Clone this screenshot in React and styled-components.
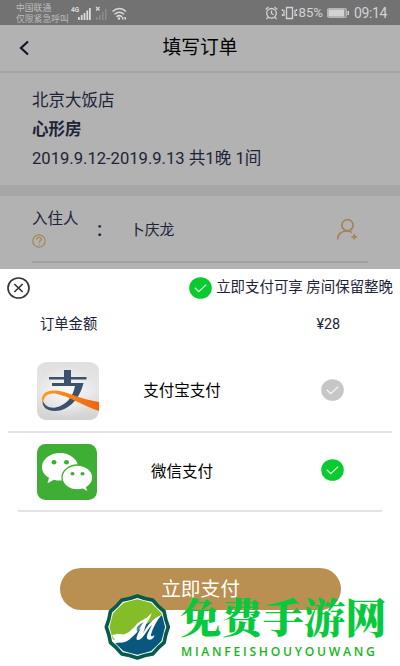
import React from 'react';
import styled, { createGlobalStyle } from 'styled-components';

const Global = createGlobalStyle`
  * { box-sizing: border-box; }
  body { margin: 0; background: #fff; }
`;

const Screen = styled.div`
  position: relative;
  width: 400px;
  height: 666px;
  overflow: hidden;
  display: flex;
  flex-direction: column;
  background: #b2b2b2;
  color: #1d2338;
  font-family: Roboto, 'Noto Sans CJK SC', sans-serif;
  white-space: nowrap;
`;

const StatusBar = styled.div`
  height: 25px;
  flex: none;
  display: flex;
  align-items: center;
  padding: 1px 13px 0 16px;
  background: #727272;
  color: #d2d2d2;
`;

const Carrier = styled.div`
  width: 54px;
  padding-top: 1px;
  font-size: 8.8px;
  line-height: 11px;
  color: #bdbdbd;
`;

const StatusRight = styled.div`
  margin-left: auto;
  display: flex;
  align-items: center;
  font-size: 13.2px;
  line-height: 24px;
`;

const Battery = styled.svg`
  margin: 0 5px 0 4px;
`;

const Clock = styled.span`
  font-size: 14px;
  width: 33px;
  letter-spacing: -0.4px;
`;

const Header = styled.div`
  height: 46px;
  flex: none;
  display: grid;
  grid-template-columns: 40px 1fr 40px;
  align-items: center;
`;

const BackIcon = styled.svg`
  margin: 0 0 0 18px;
`;

const Title = styled.h1`
  margin: 0;
  text-align: center;
  font-size: 18.8px;
  line-height: 26px;
  font-weight: 400;
  color: #000;
`;

const HotelCard = styled.div`
  height: 125px;
  flex: none;
  padding: 13px 32px 0;
  border-top: 2px solid #a5a5a5;
  border-bottom: 11px solid #a6a6a6;
`;

const HotelLine = styled.div`
  height: 29px;
  line-height: 29px;
  font-size: ${(p) => p.$size || 16.5}px;
  font-weight: ${(p) => (p.$bold ? 700 : 400)};
`;

const GuestRow = styled.div`
  height: 67px;
  flex: none;
  margin: 0 32px 6px;
  border-bottom: 2px solid #a1a1a1;
  display: grid;
  grid-template-columns: 65px 33px 1fr 31px;
  align-items: center;
`;

const GuestLabel = styled.div`
  display: flex;
  flex-direction: column;
  font-size: 15.5px;
  line-height: 24px;
  gap: 3px;
  padding-bottom: 3px;
`;

const GuestText = styled.span`
  font-size: ${(p) => p.$size || 14.8}px;
  font-weight: ${(p) => p.$weight || 400};
  line-height: 24px;
  padding-top: ${(p) => p.$top ?? 2}px;
`;

const Sheet = styled.div`
  flex: 1;
  display: flex;
  flex-direction: column;
  background: #fff;
`;

const SheetHeader = styled.div`
  height: 38px;
  flex: none;
  display: flex;
  align-items: center;
  justify-content: space-between;
  padding: 0 7px;
`;

const Benefit = styled.div`
  display: flex;
  align-items: center;
  gap: 4px;
  font-size: 14.45px;
  line-height: 24px;
`;

const AmountRow = styled.div`
  height: 35px;
  flex: none;
  display: flex;
  justify-content: space-between;
  padding: 0 60px 0 40px;
  font-size: 14.3px;
  line-height: 34px;
`;

const PayRow = styled.div`
  height: ${(p) => p.$height}px;
  flex: none;
  margin: ${(p) => p.$margin};
  padding: ${(p) => p.$padding};
  border-bottom: 2px solid #e3e3e3;
  display: grid;
  grid-template-columns: 62px 1fr 23px;
  align-items: center;
`;

const PayName = styled.div`
  padding-right: 56px;
  text-align: center;
  font-size: 15.5px;
  line-height: 24px;
  color: #000;
`;

const PayCheck = styled.div`
  display: flex;
  padding-bottom: 3px;
`;

const PayButton = styled.button`
  width: 281px;
  height: 42px;
  margin: 56px 0 0 60px;
  padding: 2px 0 0;
  border: 0;
  border-radius: 21px;
  background: #b99052;
  color: #fff;
  font-family: inherit;
  font-size: 19.7px;
  line-height: 38px;
`;

const Watermark = styled.div`
  position: absolute;
  left: 104px;
  top: 594px;
  display: flex;
  gap: 9px;
`;

const Brand = styled.div`
  display: flex;
  flex-direction: column;
  color: #08c93d;
`;

const BrandName = styled.div`
  height: 50px;
  font-family: 'Noto Serif CJK SC', 'Noto Sans CJK SC', serif;
  font-size: 41.3px;
  line-height: 43px;
  font-weight: 900;
`;

const BrandLatin = styled.div`
  padding-left: 1px;
  font-family: 'Open Sans', sans-serif;
  font-size: 12.2px;
  line-height: 15px;
  font-weight: 600;
  letter-spacing: 2.7px;
  color: #18b51c;
`;

const SignalIcons = () => (
  <svg width="58" height="16" viewBox="0 0 58 16" fill="#dadada">
    <text x="1" y="7" fontSize="6.500" fontWeight="700" fontFamily="Roboto">4G</text>
    <path d="M8 12h1.800v3H8zM10.800 10h1.800v5h-1.800zM13.600 8h1.800v7h-1.800zM16.400 5.500h1.800V15h-1.800zM19 3h1.800v12H19z" />
    <path d="M26 12h1.500v3H26zM29 10h1.500v5H29zM32 7h1.500v8H32zM35 4h1.500v11H35z" fill="#8d8d8d" />
    <path d="M26 2l3.500 3.500M29.500 2L26 5.500" stroke="#dadada" strokeWidth="1.200" />
    <g fill="none" stroke="#dadada" strokeWidth="1.500">
      <path d="M42.500 6.500q7-6 13.500 0M44.500 9.300q5-4.200 9.500 0M46.500 11.800q2.700-2.300 5.500 0" />
    </g>
    <circle cx="49" cy="13.500" r="1.200" />
    <path d="M52 12h1.500v2.500H52zM54.500 12H56v2.500h-1.500z" />
  </svg>
);

const AlarmIcons = () => (
  <svg width="34" height="14" viewBox="0 0 34 14" fill="none" stroke="#d2d2d2" strokeWidth="1.300">
    <circle cx="6.500" cy="7.300" r="4.800" />
    <path d="M6.500 4.500v3l2 1.300M.7 3.500L3.500 1M12.300 3.500L9.500 1M2.800 11.500L1.500 13M10.200 11.500l1.300 1.500" />
    <path d="M21.500 1.500h6v11h-6zM19 4v6M17.500 3v2M17.500 8v2M30 4v6M31.500 3v2M31.500 8v2" />
  </svg>
);

const CheckCircle = ({ color }) => (
  <svg width="23" height="22" viewBox="0 0 23 22">
    <ellipse cx="11.500" cy="11" rx="11.300" ry="10.800" fill={color} />
    <path d="M5.800 10.700l4 3.900 7.400-7" fill="none" stroke="#fff" strokeOpacity=".85" strokeWidth="1.300" />
  </svg>
);

const AlipayLogo = () => (
  <svg width="62" height="58" viewBox="0 0 62 58">
    <defs>
      <linearGradient id="silver" x1="0" y1="0" x2="0" y2="1">
        <stop offset="0" stopColor="#e0e0e0" />
        <stop offset=".5" stopColor="#e6e6e6" />
        <stop offset="1" stopColor="#d2d2d2" />
      </linearGradient>
      <radialGradient id="shine">
        <stop offset="0" stopColor="#fafafa" />
        <stop offset="1" stopColor="#fafafa" stopOpacity="0" />
      </radialGradient>
      <linearGradient id="orange" x1="0" y1="0" x2="1" y2="0">
        <stop offset="0" stopColor="#ff9b20" />
        <stop offset="1" stopColor="#ee6410" />
      </linearGradient>
    </defs>
    <rect width="62" height="58" rx="9" fill="url(#silver)" />
    <ellipse cx="30" cy="30" rx="30" ry="26" fill="url(#shine)" />
    <path d="M27 8h7v7h15.500v2.500H12V15h15zM27 17.500h7V21h12.500C43 36 32 49 18 49 9.500 49 5 45 5.500 38c2 6 7 8.500 13 7.500C29 43.500 36 35 38 24H15v-3h12z" fill="#3b526d" />
    <path d="M6 42C2 33 9 27.500 19 28.500c12 1.200 22 8 43 11.500v9C45 43 32 34.500 20 32 11 30.200 6.500 34 6 42z" fill="url(#orange)" />
  </svg>
);

const WechatLogo = () => (
  <svg width="60" height="56" viewBox="0 0 60 56">
    <rect width="60" height="56" rx="8.500" fill="#3eae35" />
    <path d="M23 9C13 9 5 15.300 5 23c0 4.500 2.600 8.300 7 10.800l-1.500 5.400 6.500-3.400c2 .6 4 .8 6 .8 10 0 18-6 18-13.600S33 9 23 9z" fill="#fff" />
    <path d="M40.300 21C31.800 21 25 26.600 25 33.500S31.800 46 40.300 46c2 0 3.800-.3 5.400-.8l5.300 3-1.200-5c3.600-2.200 6-5.700 6-9.700C55.800 26.600 49 21 40.300 21z" fill="#fff" stroke="#3eae35" strokeWidth="1.300" />
    <g fill="#3eae35">
      <ellipse cx="17" cy="18.300" rx="2.500" ry="2.200" />
      <ellipse cx="29.500" cy="18.300" rx="2.500" ry="2.200" />
      <ellipse cx="35.500" cy="29.800" rx="2.100" ry="1.800" />
      <ellipse cx="45.500" cy="29.800" rx="2.100" ry="1.800" />
    </g>
  </svg>
);

const scallop = (cx, cy, outer, inner) => {
  const point = (radius, degrees) => {
    const angle = (degrees * Math.PI) / 180;
    return `${(cx + radius * Math.cos(angle)).toFixed(2)} ${(cy + radius * Math.sin(angle)).toFixed(2)}`;
  };
  let path = `M${point(outer, 0)}`;
  for (let i = 0; i < 12; i += 1) {
    path += `Q${point(inner, i * 30 + 15)} ${point(outer, i * 30 + 30)}`;
  }
  return `${path}Z`;
};

const BrandLogo = () => (
  <svg width="67" height="66" viewBox="0 0 67 66">
    <defs>
      <clipPath id="badge"><path d={scallop(33.3, 33, 27.8, 27)} /></clipPath>
    </defs>
    <path d={scallop(33.3, 33, 31, 29)} fill="#fff" stroke="#075c49" strokeWidth="3.600" strokeLinejoin="round" />
    <g clipPath="url(#badge)">
      <path d="M0 0h67v18L57 21 42 42 20 46 0 45z" fill="#84bd27" />
      <path d="M0 49q10 1 19-1Q27 43 36 34L58 21l9-4v49H0z" fill="#07577f" />
      <path d="M8 41.500c2-2 3-.5 4.500-1.500 1-1 2 .5 3.500 0 6 2 12-4 16-9 4-5 10-5 15.500-12-1 6-4.500 8-6 13-1 3-1.500 5-2.500 7.500 5-9 9-14.500 18.500-18.500-5 6-8.500 12.500-10.500 19.500-.7 2.500 1.500 2 3.500.5-.5 4-5 6-7 4-2-2.500 1.500-8 4.500-14-6.500 6-8.500 14.500-14 15-3.500 0 0-7 3-12-7 7-12.500 15-20 14.500-4-.5-7-3-9-7z" fill="#fff" />
      <path d="M33 33q2-3 7-5-3 3-6 10-2-1-1-5z" fill="#07577f" opacity=".7" />
    </g>
  </svg>
);

export default function App() {
  return (
    <Screen>
      <Global />
      <StatusBar>
        <Carrier>中国联通<br />仅限紧急呼叫</Carrier>
        <SignalIcons />
        <StatusRight>
          <AlarmIcons />
          <span>85%</span>
          <Battery width="22" height="10" viewBox="0 0 22 10" fill="#d2d2d2">
            <rect x=".5" y=".5" width="19" height="9" rx="1" fill="#999" stroke="#b5b5b5" />
            <rect x="1.500" y="1.500" width="15.500" height="7" />
            <rect x="20.500" y="3" width="1.500" height="4" />
          </Battery>
          <Clock>09:14</Clock>
        </StatusRight>
      </StatusBar>
      <Header>
        <BackIcon width="12" height="16" viewBox="0 0 12 16" fill="none" stroke="#111629" strokeWidth="2.200">
          <path d="M10 1.500L3 8l7 6.500" />
        </BackIcon>
        <Title>填写订单</Title>
      </Header>
      <HotelCard>
        <HotelLine>北京大饭店</HotelLine>
        <HotelLine $bold>心形房</HotelLine>
        <HotelLine $size={16.6}>2019.9.12-2019.9.13 共1晚 1间</HotelLine>
      </HotelCard>
      <GuestRow>
        <GuestLabel>
          入住人
          <svg width="14" height="14" viewBox="0 0 14 14" fill="none" stroke="#a6875a" strokeWidth="1.300">
            <circle cx="7" cy="7" r="6.200" />
            <path d="M4.800 5.500c0-3 4.500-2.700 4.500-.2C9.300 7 7 6.800 7 8.800M7 10v1.200" />
          </svg>
        </GuestLabel>
        <GuestText $size={20} $weight={500} $top={0}>:</GuestText>
        <GuestText>卜庆龙</GuestText>
        <svg width="22" height="22" viewBox="1 -1 22 22" fill="none" stroke="#a38358" strokeWidth="1.700">
          <circle cx="11.500" cy="6.200" r="5.600" />
          <path d="M1.500 20.500c0-5 4-8.500 9-8.500 2 0 4 .5 5.500 1.500M18.300 15v5.500M15.500 17.800H21" />
        </svg>
      </GuestRow>
      <Sheet>
        <SheetHeader>
          <svg width="23" height="22" viewBox="0 0 23 22" fill="none" stroke="#33363b" strokeWidth="1.700">
            <ellipse cx="11.500" cy="11" rx="10.500" ry="10" />
            <path d="M7.300 7l8.400 8M15.700 7l-8.400 8" />
          </svg>
          <Benefit>
            <CheckCircle color="#09cb2f" />
            立即支付可享 房间保留整晚
          </Benefit>
        </SheetHeader>
        <AmountRow><span>订单金额</span><span>¥28</span></AmountRow>
        <PayRow $height={91} $margin="0 8px" $padding="9px 48px 0 29px">
          <AlipayLogo />
          <PayName>支付宝支付</PayName>
          <PayCheck><CheckCircle color="#c6c6c6" /></PayCheck>
        </PayRow>
        <PayRow $height={79} $margin="0 18px" $padding="0 38px 0 19px">
          <WechatLogo />
          <PayName>微信支付</PayName>
          <PayCheck><CheckCircle color="#09cb2f" /></PayCheck>
        </PayRow>
        <PayButton>立即支付</PayButton>
      </Sheet>
      <Watermark>
        <BrandLogo />
        <Brand>
          <BrandName>免费手游网</BrandName>
          <BrandLatin>MIANFEISHOUYOUWANG</BrandLatin>
        </Brand>
      </Watermark>
    </Screen>
  );
}
